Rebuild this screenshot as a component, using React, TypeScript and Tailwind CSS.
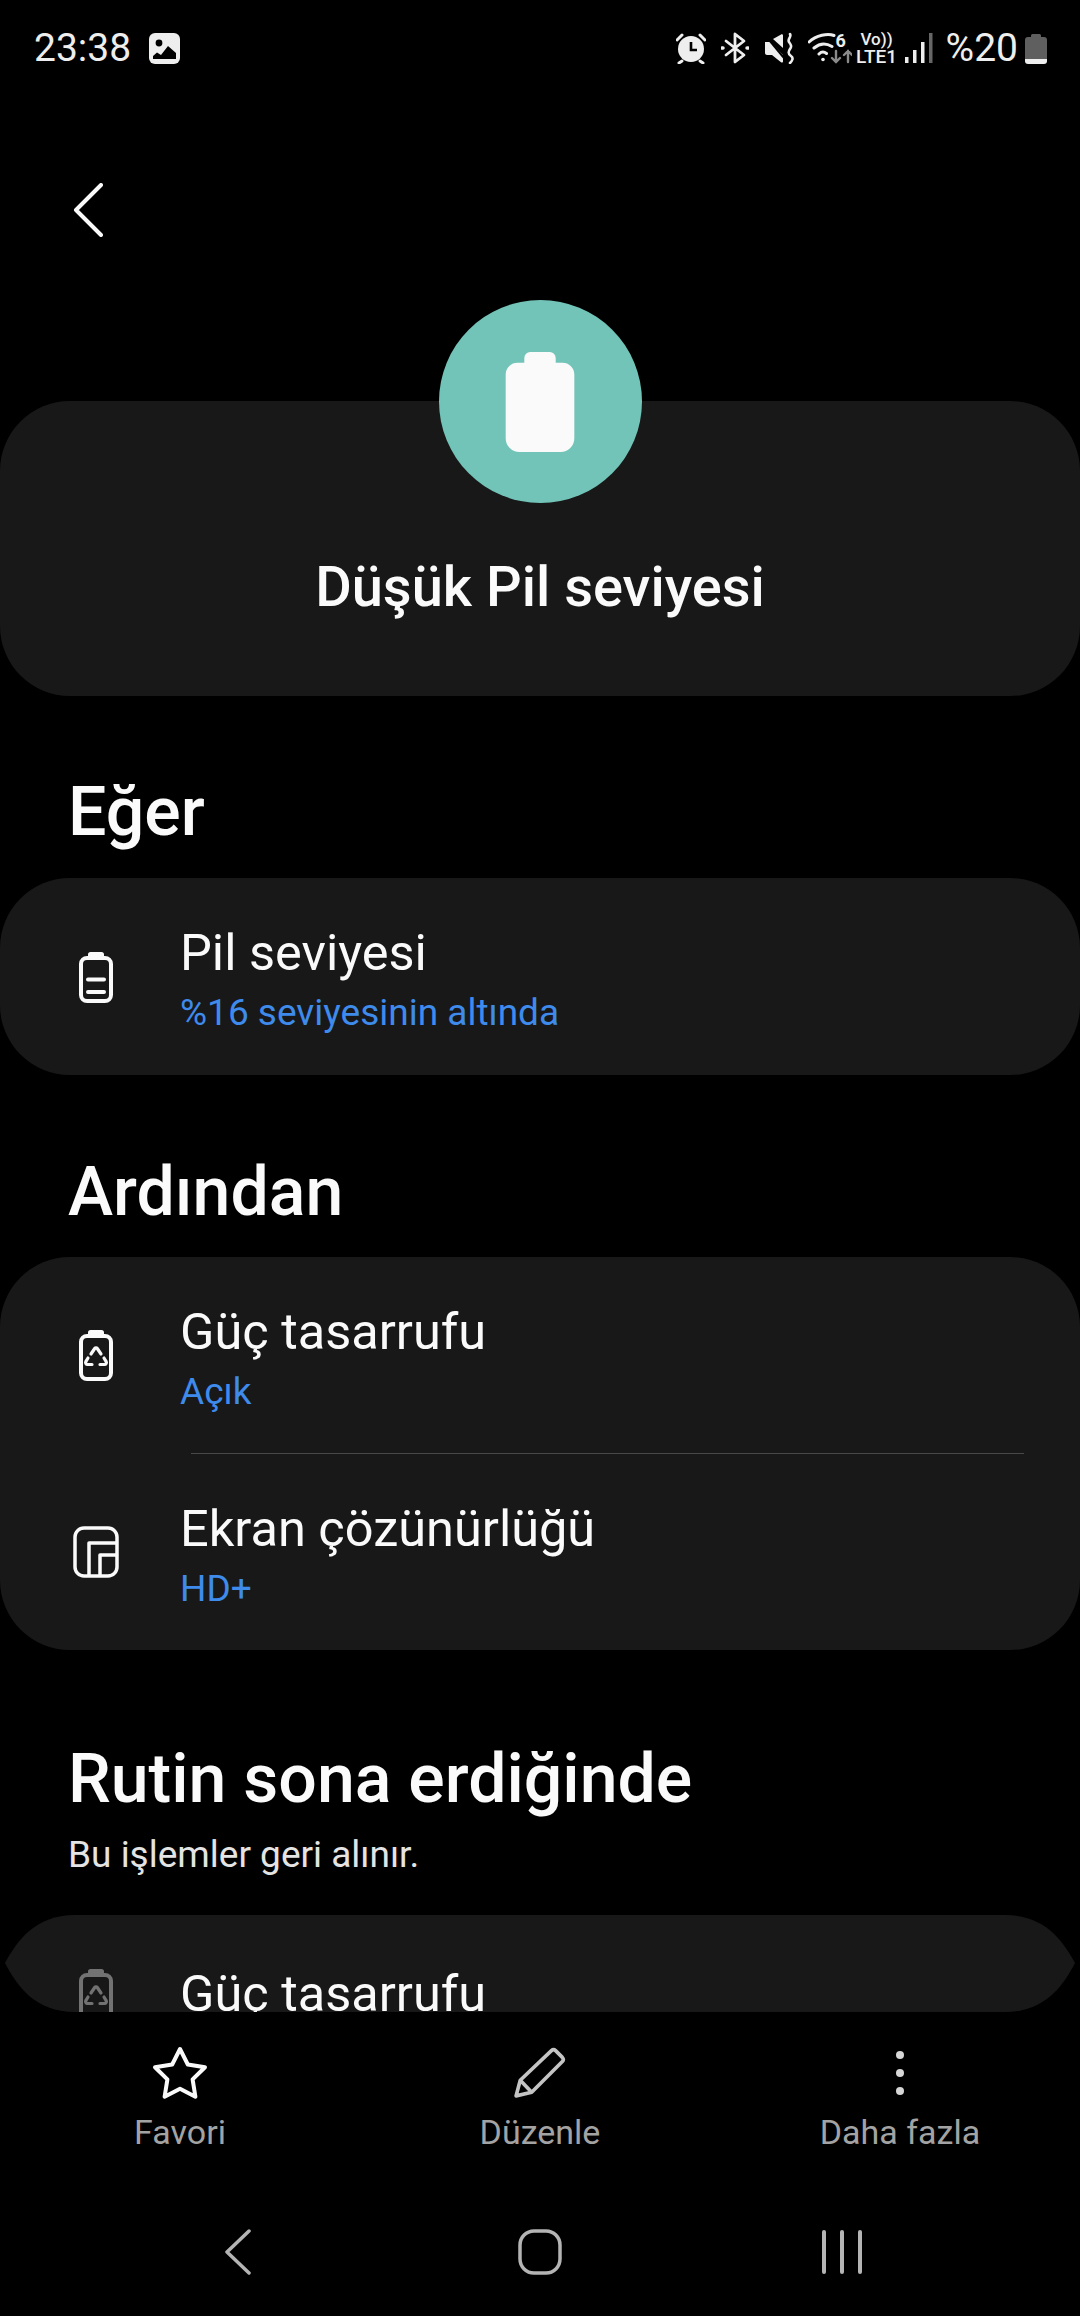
function RowIcon({ children, dim }: { children: React.ReactNode; dim?: boolean }) {
  return (
    <svg
      viewBox="0 0 46 52"
      className={`w-[46px] h-[52px] ml-[73px] mr-[61px] shrink-0 ${dim ? 'opacity-40' : ''}`}
      fill="none"
      stroke="#fafafa"
      strokeWidth="4"
      strokeLinecap="round"
      strokeLinejoin="round"
    >
      {children}
    </svg>
  )
}

function BatteryShell() {
  return (
    <>
      <rect x="8" y="7" width="30" height="43" rx="6" />
      <path d="M16 6V3.5a1.5 1.5 0 0 1 1.5-1.5h11a1.500 1.500 0 0 1 1.5 1.5V6z" fill="#fafafa" strokeWidth="2" />
    </>
  )
}

function LevelIcon() {
  return (
    <RowIcon>
      <BatteryShell />
      <path d="M15 28.5h16M15 41h16" />
    </RowIcon>
  )
}

function SaverIcon({ dim }: { dim?: boolean }) {
  return (
    <RowIcon dim={dim}>
      <BatteryShell />
      <path
        d="M18 25l3.700-5.500a1.600 1.600 0 0 1 2.600 0L28 25M15 29l-2 3.300a2 2 0 0 0 1.700 3.200H19M31 29l2 3.300a2 2 0 0 1-1.700 3.200H27"
        strokeWidth="3.200"
      />
    </RowIcon>
  )
}

function ResolutionIcon() {
  return (
    <RowIcon>
      <rect x="2" y="2" width="42" height="48" rx="9" strokeWidth="3.5" />
      <path d="M16 50V17h28M27 50V29h17" strokeWidth="3.5" strokeLinecap="butt" />
    </RowIcon>
  )
}

function Row({ icon, title, sub }: { icon: React.ReactNode; title: string; sub: string }) {
  return (
    <div className="h-[196px] flex items-center">
      {icon}
      <div className="mt-[8px]">
        <p className="text-[50.5px] leading-[58px] text-[#fafafa]">{title}</p>
        <p className="text-[37px] leading-[48px] mt-[7px] text-[#3e8bec]">{sub}</p>
      </div>
    </div>
  )
}

function StatusBar() {
  return (
    <div className="h-[96px] shrink-0 flex items-center justify-between pl-[34px] pr-[33px] text-[#eeeeee]">
      <div className="flex items-center gap-[18px]">
        <span className="text-[39px] leading-[44px]">23:38</span>
        <svg viewBox="0 0 31 31" className="w-[31px] h-[31px]">
          <rect width="31" height="31" rx="6" fill="#eeeeee" />
          <circle cx="10" cy="10" r="3.4" fill="#000" />
          <path d="M4 26v-3l4-3.5 4 2.5 7-9 8 7v6z" fill="#000" />
        </svg>
      </div>
      <div className="flex items-center">
        <svg viewBox="0 0 30 32" className="w-[30px] h-[32px] mr-[15px]" fill="#eeeeee">
          <circle cx="15" cy="17" r="13" />
          <path d="M15 10v8h6" fill="none" stroke="#000" strokeWidth="2.6" />
          <path d="M1 8l5-5M29 8l-5-5M6 29l-3 2M24 29l3 2" stroke="#eeeeee" strokeWidth="3" strokeLinecap="round" />
        </svg>
        <svg
          viewBox="0 0 28 32"
          className="w-[28px] h-[32px] mr-[15px]"
          fill="none"
          stroke="#eeeeee"
          strokeWidth="2.8"
          strokeLinecap="round"
          strokeLinejoin="round"
        >
          <path d="M5 9l18 14-9 7V2l9 7L5 23" />
          <path d="M1 16h1M26 16h1" strokeWidth="3.5" />
        </svg>
        <svg viewBox="0 0 30 32" className="w-[30px] h-[32px] mr-[14px]" fill="#eeeeee">
          <path d="M1 10h5l2 1 11 12v6.5c0 1-1 1.5-2 .7L8 23H3c-1 0-2-1-2-2z" />
          <path d="M18 2l1 1v13L9 7z" />
          <path d="M1 3l19 23" stroke="#000" strokeWidth="2" />
          <path
            d="M26 2c2 3-3 5-1 8s3 4 1 7-2 5 1 7 1 5-1 7"
            fill="none"
            stroke="#eeeeee"
            strokeWidth="2.6"
            strokeLinecap="round"
          />
        </svg>
        <svg
          viewBox="0 0 44 32"
          className="w-[44px] h-[32px] mr-[6px]"
          fill="none"
          stroke="#eeeeee"
          strokeWidth="3"
          strokeLinecap="round"
        >
          <path d="M1 10C8 3 20 1 26 3.500M6 16c6-5 12-5 18-1.500M11 22c2.500-2.500 5-2.500 7.500-.5" />
          <circle cx="15" cy="27.500" r="1.800" fill="#eeeeee" stroke="none" />
          <path d="M28 19v11M24 26l4 4 4-4M40 30V19M36 23l4-4 4 4" stroke="#8a8a8a" strokeWidth="2.4" />
        </svg>
        <div className="relative w-0 h-[32px]">
          <span className="absolute left-[-22px] top-[-1px] text-[18px] leading-[20px] font-bold text-[#eeeeee]">6</span>
        </div>
        <div className="w-[38px] mr-[9px] flex flex-col items-center text-[#eeeeee]">
          <span className="text-[17px] leading-[17px] font-medium">Vo))</span>
          <span className="text-[19px] leading-[17px] font-medium">LTE1</span>
        </div>
        <svg viewBox="0 0 28 30" className="w-[28px] h-[30px] mr-[13px]" fill="#eeeeee">
          <rect x="0" y="24" width="3.5" height="6" />
          <rect x="8" y="17" width="3.5" height="13" />
          <rect x="16" y="9" width="3.5" height="21" />
          <rect x="24" y="0" width="3.5" height="30" fill="#666666" />
        </svg>
        <span className="text-[39px] leading-[44px] mr-[7px]">%20</span>
        <svg viewBox="0 0 22 31" className="w-[22px] h-[31px]">
          <path d="M6 2.5A1.5 1.5 0 0 1 7.500 1h7A1.500 1.500 0 0 1 16 2.500V4h3a3 3 0 0 1 3 3v19H0V7a3 3 0 0 1 3-3h3z" fill="#5f5f5f" />
          <path d="M0 26h22v2a3 3 0 0 1-3 3H3a3 3 0 0 1-3-3z" fill="#eeeeee" />
        </svg>
      </div>
    </div>
  )
}

function ActionItem({ icon, label }: { icon: React.ReactNode; label: string }) {
  return (
    <div className="flex flex-col items-center">
      <div className="h-[56px] flex items-center justify-center">{icon}</div>
      <p className="text-[34px] leading-[44px] mt-[9px] text-[#a3a3a3]">{label}</p>
    </div>
  )
}

export default function App() {
  return (
    <div className="w-[1080px] h-[2316px] bg-black flex flex-col overflow-hidden font-['Roboto',sans-serif]">
      <StatusBar />
      <div className="flex-1 min-h-0 overflow-hidden">
        <div className="h-[204px] pt-[87px] pl-[73px]">
          <svg
            viewBox="0 0 30 54"
            className="w-[30px] h-[54px]"
            fill="none"
            stroke="#fafafa"
            strokeWidth="4"
            strokeLinecap="round"
            strokeLinejoin="round"
          >
            <path d="M28 2L3 27l25 25" />
          </svg>
        </div>

        <div className="mt-[101px] h-[295px] rounded-[70px] bg-[#181818] flex flex-col items-center">
          <div className="-mt-[101px] w-[203px] h-[203px] shrink-0 rounded-full bg-[#72c4b8] flex items-center justify-center">
            <svg viewBox="0 0 70 102" className="w-[70px] h-[100px]" fill="#fafafa">
              <path d="M19 11V6a6 6 0 0 1 6-6h20a6 6 0 0 1 6 6v5h7a12 12 0 0 1 12 12v65a14 14 0 0 1-14 14H14A14 14 0 0 1 0 88V23a12 12 0 0 1 12-12z" />
            </svg>
          </div>
          <h1 className="mt-[52px] text-[56px] leading-[64px] font-medium text-[#fafafa]">Düşük Pil seviyesi</h1>
        </div>

        <h2 className="pt-[82px] pb-[32px] pl-[68px] text-[68px] leading-[68px] font-medium text-[#fafafa]">Eğer</h2>
        <div className="rounded-[70px] bg-[#181818] py-[0.5px]">
          <Row icon={<LevelIcon />} title="Pil seviyesi" sub="%16 seviyesinin altında" />
        </div>

        <h2 className="pt-[83px] pb-[31px] pl-[68px] text-[68px] leading-[68px] font-medium text-[#fafafa]">Ardından</h2>
        <div className="rounded-[70px] bg-[#181818]">
          <Row icon={<SaverIcon />} title="Güç tasarrufu" sub="Açık" />
          <div className="h-px ml-[191px] mr-[56px] bg-[#484848]" />
          <Row icon={<ResolutionIcon />} title="Ekran çözünürlüğü" sub="HD+" />
        </div>

        <h2 className="pt-[95px] pl-[68px] text-[68px] leading-[68px] font-medium text-[#fafafa]">Rutin sona erdiğinde</h2>
        <p className="mt-[18px] mb-[36px] pl-[68px] text-[37px] leading-[48px] text-[#e4e4e4]">Bu işlemler geri alınır.</p>
        <div className="mx-[5px] h-[97px] bg-[#181818] overflow-hidden flex items-start [clip-path:path('M70,0H1000C1040,0,1058,26,1070,48C1058,71,1040,97,1000,97H70C30,97,12,71,0,48C12,26,30,0,70,0Z')]">
          <div className="mt-[53px] -ml-[5px]">
            <SaverIcon dim />
          </div>
          <p className="mt-[50px] text-[50.5px] leading-[58px] text-[#fafafa]">Güç tasarrufu</p>
        </div>
      </div>

      <div className="h-[176px] shrink-0 pt-[33px] grid grid-cols-3">
        <ActionItem
          label="Favori"
          icon={
            <svg viewBox="0 0 56 54" className="w-[56px] h-[54px]" fill="none" stroke="#fafafa" strokeWidth="4" strokeLinejoin="round">
              <path d="M28 3l7.800 15.500 17.200 2.700-12.400 12.200 2.800 17.300L28 42.700 12.600 50.700l2.800-17.300L3 21.200l17.200-2.700z" />
            </svg>
          }
        />
        <ActionItem
          label="Düzenle"
          icon={
            <svg viewBox="0 0 50 50" className="w-[52px] h-[52px]" fill="none" stroke="#c4c4c4" strokeWidth="3.500" strokeLinejoin="round">
              <path d="M36 3.500a3 3 0 0 1 4 0l6.500 6.500a3 3 0 0 1 0 4L17 43.500 2 47l4-15z" />
              <path d="M6 32l11 11.500" />
            </svg>
          }
        />
        <ActionItem
          label="Daha fazla"
          icon={
            <div className="flex flex-col gap-[10px]">
              <div className="w-[8px] h-[8px] rounded-full bg-[#d6d6d6]" />
              <div className="w-[8px] h-[8px] rounded-full bg-[#d6d6d6]" />
              <div className="w-[8px] h-[8px] rounded-full bg-[#d6d6d6]" />
            </div>
          }
        />
      </div>

      <div className="h-[128px] shrink-0 grid grid-cols-[302px_302px_302px] justify-center items-center justify-items-center">
        <svg viewBox="0 0 26 46" className="w-[26px] h-[46px]" fill="none" stroke="#b4b4b4" strokeWidth="3.500" strokeLinecap="round" strokeLinejoin="round">
          <path d="M24 2L2 23l22 21" />
        </svg>
        <svg viewBox="0 0 44 46" className="w-[44px] h-[46px]" fill="none" stroke="#b4b4b4" strokeWidth="3.500">
          <rect x="2" y="2" width="40" height="42" rx="14" />
        </svg>
        <div className="flex gap-[14px]">
          <div className="w-[4px] h-[44px] rounded-full bg-[#b4b4b4]" />
          <div className="w-[4px] h-[44px] rounded-full bg-[#b4b4b4]" />
          <div className="w-[4px] h-[44px] rounded-full bg-[#b4b4b4]" />
        </div>
      </div>
    </div>
  )
}
